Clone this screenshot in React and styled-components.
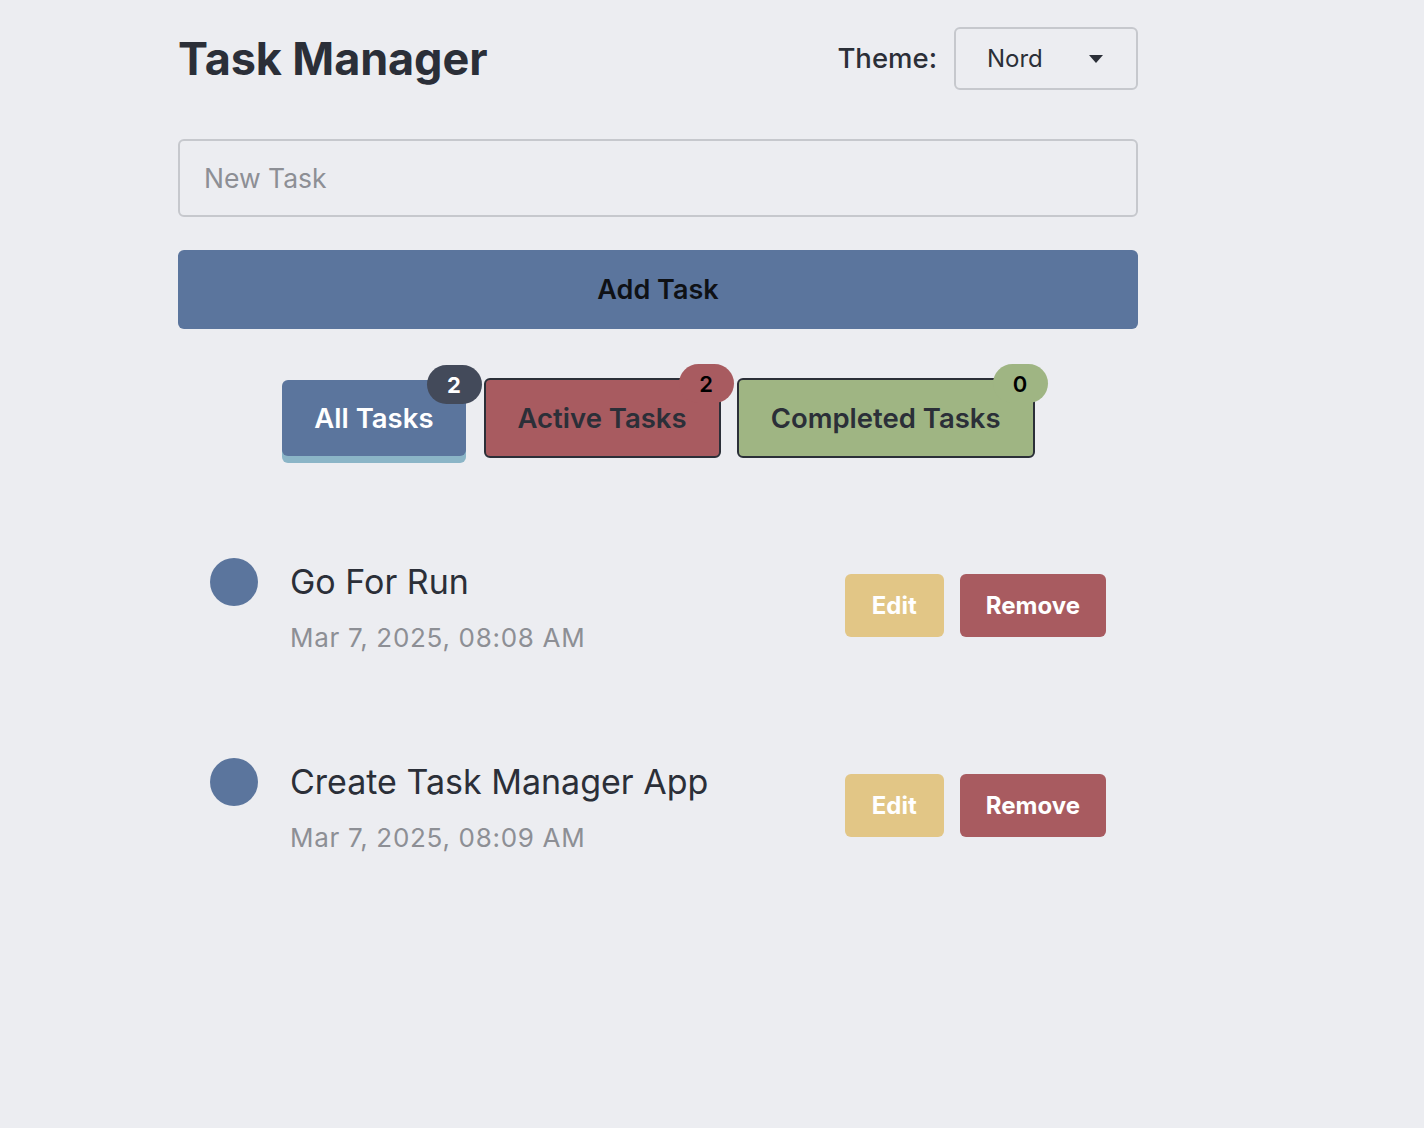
import React from "react";
import styled, { createGlobalStyle } from "styled-components";

const C = {
  bg: "#ECEDF1",
  text: "#2B2F38",
  blue: "#5B759D",
  red: "#A85B60",
  green: "#9FB583",
  yellow: "#E2C686",
  badgeDark: "#434A5A",
  underline: "#8BB5C7",
  muted: "#8D8F95",
  border: "#C6C8CD",
};

const Global = createGlobalStyle`
  * { box-sizing: border-box; }
  html, body { margin: 0; padding: 0; background: ${C.bg}; }
  body { font-family: Inter, "Noto Sans", sans-serif; color: ${C.text}; }
`;

const Page = styled.div`
  width: 960px;
  margin-left: 178px;
  padding-top: 27px;
  padding-bottom: 40px;
`;

const Header = styled.header`
  display: flex;
  align-items: center;
  justify-content: space-between;
  height: 62px;
`;

const Title = styled.h1`
  margin: 0;
  font-size: 45px;
  font-weight: 700;
  letter-spacing: -0.1px;
  color: ${C.text};
`;

const ThemeGroup = styled.div`
  display: flex;
  align-items: center;
  gap: 17px;
`;

const ThemeLabel = styled.span`
  font-size: 27.5px;
  font-weight: 500;
  color: ${C.text};
`;

const Select = styled.div`
  width: 184px;
  height: 63px;
  border: 2px solid ${C.border};
  border-radius: 6px;
  display: flex;
  align-items: center;
  justify-content: space-between;
  padding: 0 33px 0 31px;
  font-size: 24px;
  color: ${C.text};
`;

const Caret = styled.span`
  width: 0;
  height: 0;
  border-left: 7.5px solid transparent;
  border-right: 7.5px solid transparent;
  border-top: 8px solid ${C.text};
  margin-top: 2px;
`;

const Input = styled.input`
  display: block;
  width: 100%;
  height: 78px;
  margin-top: 50px;
  border: 2px solid ${C.border};
  border-radius: 6px;
  background: transparent;
  padding: 0 24px;
  font-family: inherit;
  font-size: 26.5px;
  color: ${C.text};
  outline: none;
  &::placeholder { color: ${C.muted}; }
`;

const AddButton = styled.button`
  display: block;
  width: 100%;
  height: 79px;
  margin-top: 33px;
  border: none;
  border-radius: 6px;
  background: ${C.blue};
  color: #0f1115;
  font-family: inherit;
  font-size: 27px;
  font-weight: 600;
`;

const Tabs = styled.div`
  display: flex;
  align-items: center;
  justify-content: center;
  gap: 16px;
  margin-top: 49px;
  height: 80px;
  padding-left: 1px;
`;

const Tab = styled.button`
  position: relative;
  height: ${(p) => (p.$active ? "76px" : "80px")};
  padding: 0 32px;
  border: ${(p) => (p.$active ? "none" : `2px solid ${C.text}`)};
  border-radius: 6px;
  background: ${(p) => p.$bg};
  color: ${(p) => (p.$active ? "#ffffff" : C.text)};
  font-family: inherit;
  font-size: 27.5px;
  font-weight: 600;
  box-shadow: ${(p) => (p.$active ? `0 7px 0 ${C.underline}` : "none")};
  margin-right: ${(p) => (p.$active ? "2px" : "0")};
`;

const Badge = styled.span`
  position: absolute;
  top: ${(p) => (p.$active ? "-15px" : "-16px")};
  right: ${(p) => (p.$active ? "-16px" : "-15px")};
  height: 39px;
  min-width: 55px;
  padding: 0 20px;
  border-radius: 20px;
  background: ${(p) => p.$bg};
  color: ${(p) => p.$fg};
  font-size: 22px;
  font-weight: ${(p) => (p.$active ? 700 : 600)};
  display: flex;
  align-items: center;
  justify-content: center;
`;

const List = styled.ul`
  list-style: none;
  margin: 68px 0 0;
  padding: 0;
  display: flex;
  flex-direction: column;
  gap: 41px;
`;

const Item = styled.li`
  display: flex;
  align-items: center;
  justify-content: space-between;
  padding: 32px;
`;

const ItemMain = styled.div`
  display: flex;
  align-items: flex-start;
  gap: 32px;
`;

const Dot = styled.span`
  width: 48px;
  height: 48px;
  border-radius: 50%;
  background: ${C.blue};
  flex-shrink: 0;
`;

const ItemText = styled.div`
  display: flex;
  flex-direction: column;
  gap: 16px;
`;

const ItemTitle = styled.span`
  font-size: 34px;
  line-height: 48px;
  color: ${C.text};
`;

const ItemDate = styled.span`
  font-size: 26px;
  line-height: 31px;
  letter-spacing: 0.7px;
  color: ${C.muted};
`;

const Actions = styled.div`
  display: flex;
  gap: 16px;
`;

const ActionButton = styled.button`
  height: 63px;
  padding: 0 ${(p) => p.$pad}px;
  border: none;
  border-radius: 6px;
  background: ${(p) => p.$bg};
  color: #ffffff;
  font-family: inherit;
  font-size: 24px;
  font-weight: 700;
`;

const tasks = [
  { title: "Go For Run", date: "Mar 7, 2025, 08:08 AM" },
  { title: "Create Task Manager App", date: "Mar 7, 2025, 08:09 AM" },
];

export default function App() {
  return (
    <>
      <Global />
      <Page>
        <Header>
          <Title>Task Manager</Title>
          <ThemeGroup>
            <ThemeLabel>Theme:</ThemeLabel>
            <Select>
              <span>Nord</span>
              <Caret />
            </Select>
          </ThemeGroup>
        </Header>
        <Input placeholder="New Task" />
        <AddButton>Add Task</AddButton>
        <Tabs>
          <Tab $active $bg={C.blue}>
            All Tasks
            <Badge $active $bg={C.badgeDark} $fg="#ffffff">2</Badge>
          </Tab>
          <Tab $bg={C.red}>
            Active Tasks
            <Badge $bg={C.red} $fg="#000000">2</Badge>
          </Tab>
          <Tab $bg={C.green}>
            Completed Tasks
            <Badge $bg={C.green} $fg="#000000">0</Badge>
          </Tab>
        </Tabs>
        <List>
          {tasks.map((t) => (
            <Item key={t.title}>
              <ItemMain>
                <Dot />
                <ItemText>
                  <ItemTitle>{t.title}</ItemTitle>
                  <ItemDate>{t.date}</ItemDate>
                </ItemText>
              </ItemMain>
              <Actions>
                <ActionButton $bg={C.yellow} $pad={27}>Edit</ActionButton>
                <ActionButton $bg={C.red} $pad={26}>Remove</ActionButton>
              </Actions>
            </Item>
          ))}
        </List>
      </Page>
    </>
  );
}
